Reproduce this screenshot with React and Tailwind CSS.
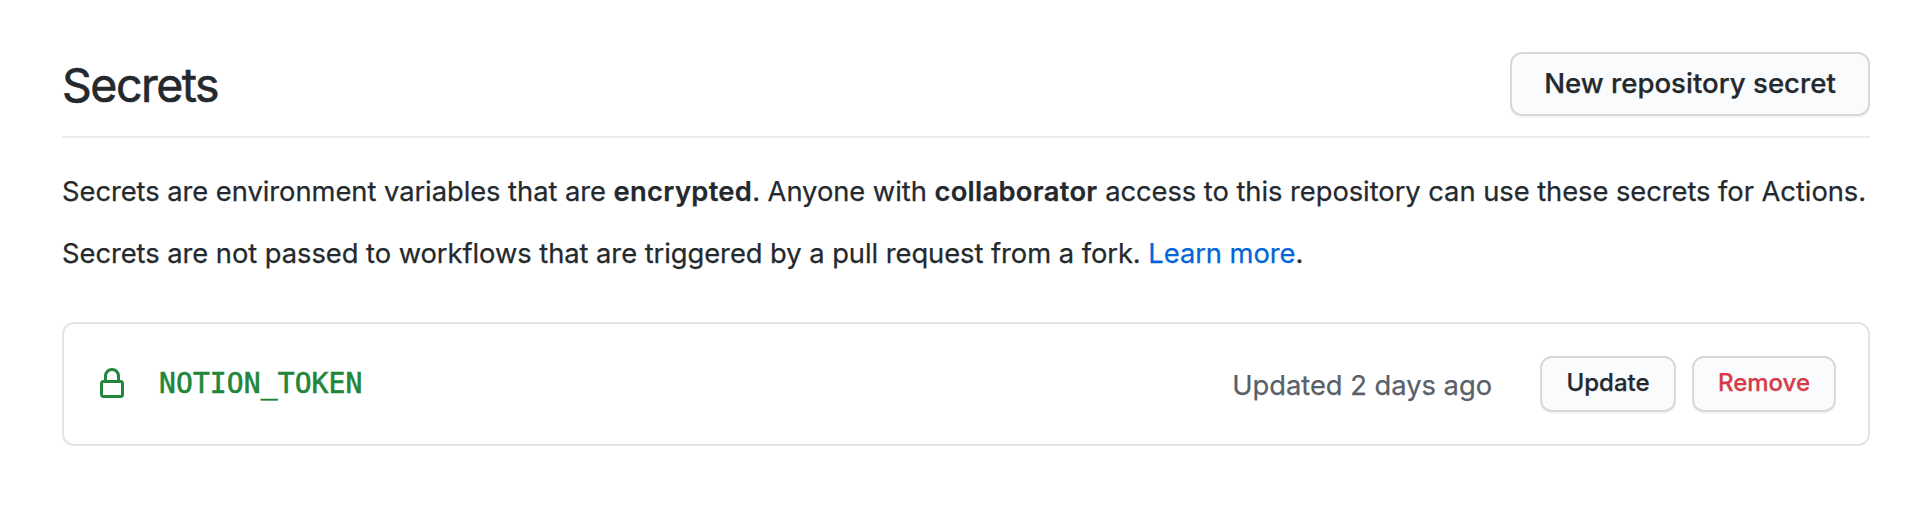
function Button({ className, children }) {
  return (
    <button
      className={`shrink-0 whitespace-nowrap rounded-[12px] border-2 border-[#d6d8da] bg-[#fafbfc] font-medium shadow-[0_2px_0_rgba(27,31,35,0.04)] ${className}`}
    >
      {children}
    </button>
  );
}

function LockIcon() {
  return (
    <svg viewBox="0 0 16 16" className="size-[32px] shrink-0 fill-[#22863a]">
      <path
        fillRule="evenodd"
        d="M4 4v2h-.25A1.75 1.75 0 002 7.75v5.5c0 .966.784 1.75 1.75 1.75h8.5A1.75 1.75 0 0014 13.25v-5.5A1.75 1.75 0 0012.25 6H12V4a4 4 0 10-8 0zm6.5 2V4a2.5 2.5 0 00-5 0v2h5zM12 7.5h.25a.25.25 0 01.25.25v5.5a.25.25 0 01-.25.25h-8.5a.25.25 0 01-.25-.25v-5.5a.25.25 0 01.25-.25H12z"
      />
    </svg>
  );
}

export default function App() {
  return (
    <main className="h-[510px] w-[1930px] bg-white pl-[62px] pr-[60px] pt-[52px] font-['Inter','Liberation_Sans',sans-serif] text-[#24292e] [-webkit-text-stroke-width:0.25px]">
      <header className="flex h-[86px] items-start justify-between border-b-2 border-[#eaecef]">
        <h1 className="whitespace-nowrap text-[46.5px] font-normal leading-[66px] tracking-[-1.5px] [-webkit-text-stroke-width:0.6px]">Secrets</h1>
        <Button className="h-[64px] w-[360px] text-[27.6px]">New repository secret</Button>
      </header>
      <p className="mt-[33px] whitespace-nowrap text-[27.35px] leading-[42px] tracking-[-0.055px]">
        Secrets are environment variables that are{' '}
        <b className="font-semibold tracking-[0.3px]">encrypted</b>. Anyone with{' '}
        <b className="font-semibold tracking-[0.3px]">collaborator</b> access to this repository can use these secrets for Actions.
      </p>
      <p className="mt-[20px] whitespace-nowrap text-[27.35px] leading-[42px] tracking-[-0.055px]">
        Secrets are not passed to workflows that are triggered by a pull request from a fork.{' '}
        <a className="text-[#0366d6]">Learn more</a>.
      </p>
      <section className="mt-[47px] flex h-[124px] items-center rounded-[12px] border-2 border-[#e1e4e8] px-[32px]">
        <LockIcon />
        <code className="ml-[31px] font-['DejaVu_Sans_Mono',monospace] text-[28px] tracking-[0.1px] text-[#22863a] [-webkit-text-stroke-width:0.6px]">NOTION_TOKEN</code>
        <span className="ml-auto whitespace-nowrap pt-[4px] text-[27.35px] tracking-[-0.03px] text-[#586069]">Updated 2 days ago</span>
        <div className="ml-[48px] flex gap-4">
          <Button className="h-[56px] w-[136px] pb-[2px] text-[24px]">Update</Button>
          <Button className="h-[56px] w-[144px] pb-[2px] text-[24px] text-[#d73a49]">Remove</Button>
        </div>
      </section>
    </main>
  );
}
